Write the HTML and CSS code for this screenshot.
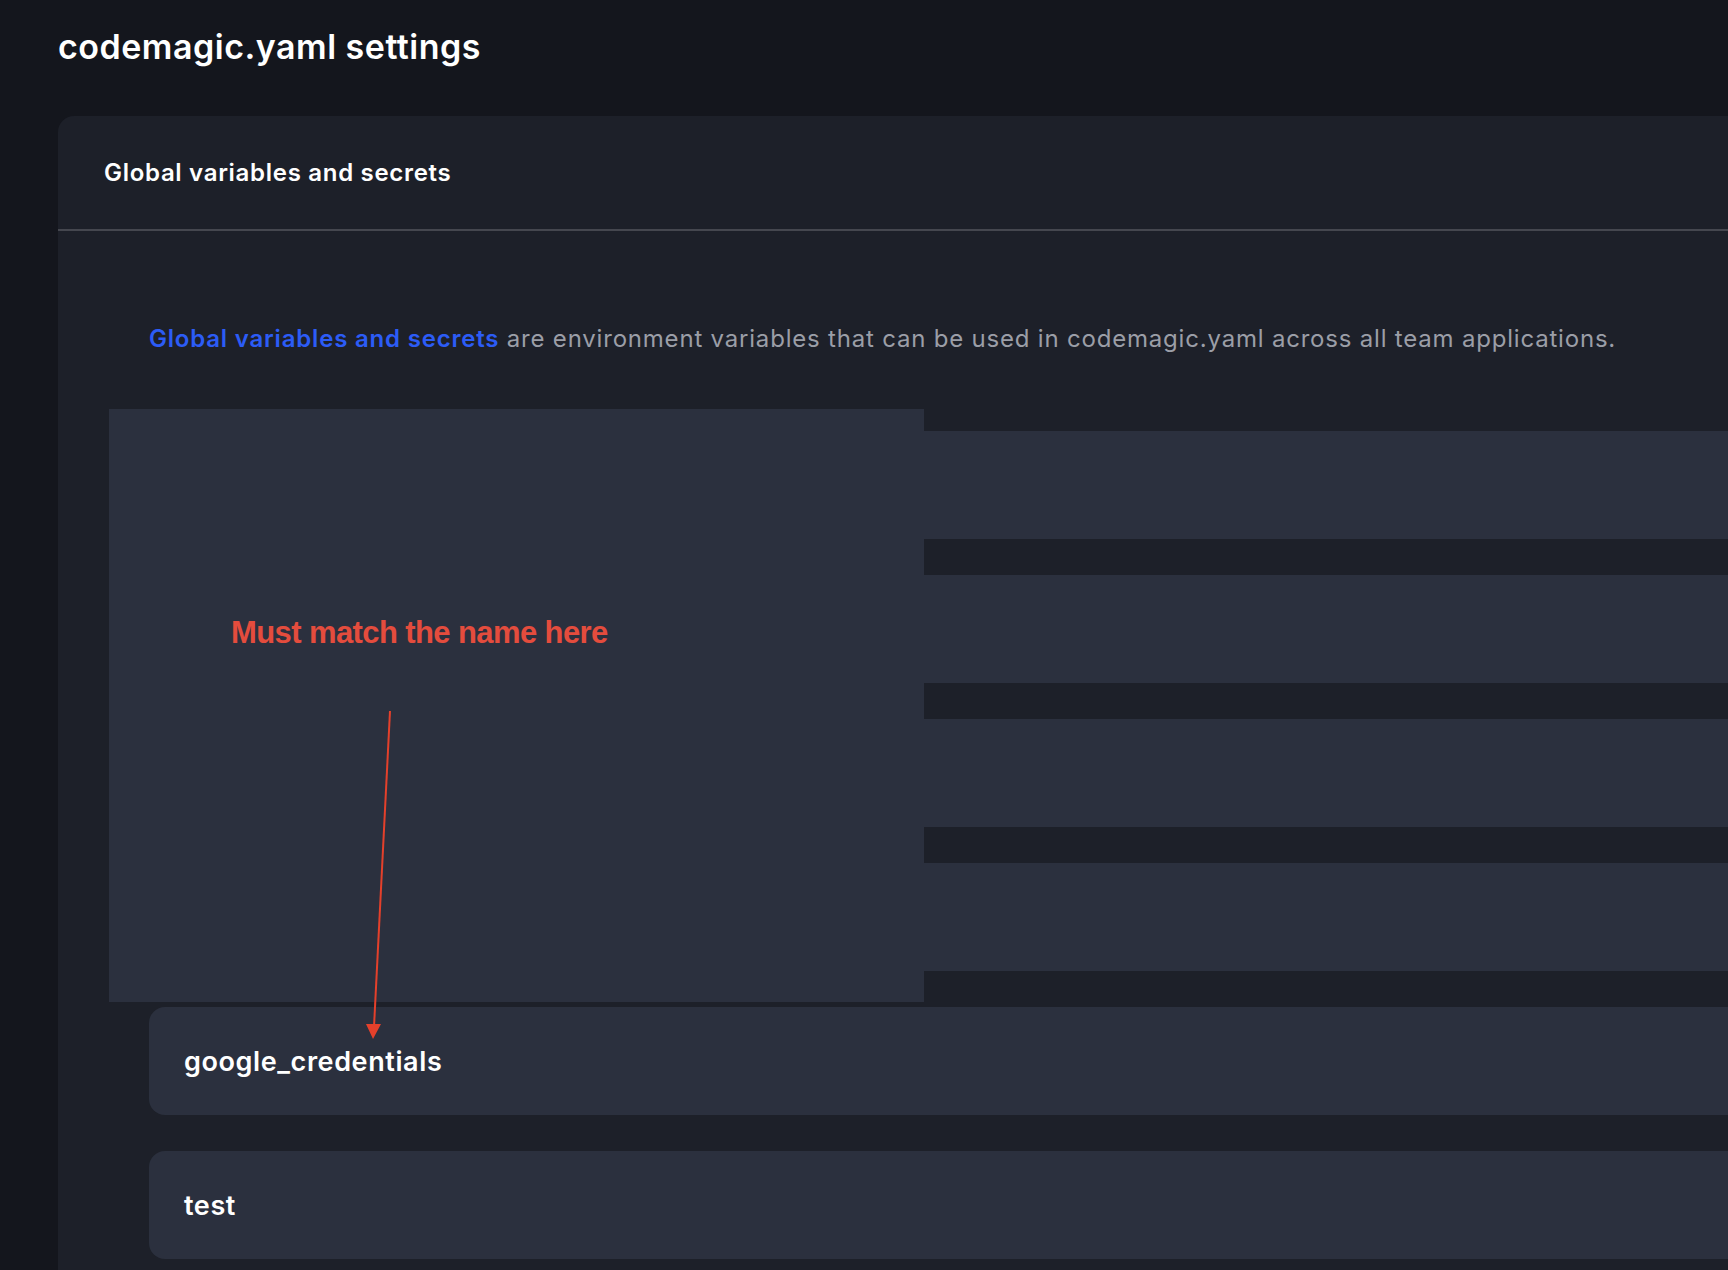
FILE: index.html
```html
<!DOCTYPE html>
<html lang="en">
<head>
  <meta charset="UTF-8">
  <meta name="viewport" content="width=device-width, initial-scale=1.0">
  <title>codemagic.yaml settings</title>
  <link rel="stylesheet" href="styles.css">
</head>
<body>
  <div class="page">
    <h1>codemagic.yaml settings</h1>
    <div class="card">
      <div class="card-header">Global variables and secrets</div>
      <div class="card-body">
        <p class="desc"><a href="#">Global variables and secrets</a> are environment variables that can be used in codemagic.yaml across all team applications.</p>
        <div class="groups">
          <div class="note">
            <span class="note-text">Must match the name here</span>
            <svg class="note-arrow" width="815" height="640" viewBox="0 0 815 640">
              <line x1="281" y1="302" x2="265" y2="618" stroke="#e4402b" stroke-width="2"/>
              <polygon points="257,615 272,615 264,630" fill="#e4402b"/>
            </svg>
          </div>
          <div class="group"></div>
          <div class="group"></div>
          <div class="group"></div>
          <div class="group"></div>
          <div class="group">google_credentials</div>
          <div class="group">test</div>
        </div>
      </div>
    </div>
  </div>
</body>
</html>
```

FILE: styles.css
```css
body {
  margin: 0;
  background: #14161d;
  font-family: Inter, "Open Sans", sans-serif;
  color: #fff;
  height: 100vh;
  overflow: hidden;
}
.page {
  padding-left: 58px;
}
h1 {
  margin: 0 0 49px;
  padding-top: 27px;
  font-size: 34px;
  line-height: 40px;
  font-weight: 600;
  letter-spacing: 0.5px;
}
.card {
  background: #1d2029;
  border-radius: 16px 0 0 0;
  margin-right: -40px;
  min-height: 1200px;
}
.card-header {
  height: 113px;
  display: flex;
  align-items: center;
  padding-left: 46px;
  font-size: 24px;
  font-weight: 600;
  letter-spacing: 0.7px;
  border-bottom: 2px solid #45474f;
}
.card-body {
  padding: 93px 0 0 91px;
}
.desc {
  margin: 0 0 77px;
  font-size: 24px;
  line-height: 30px;
  color: #9b9ea7;
  letter-spacing: 0.8px;
}
.desc a {
  color: #2c5cf6;
  font-weight: 600;
  text-decoration: none;
}
.groups {
  position: relative;
  display: flex;
  flex-direction: column;
  gap: 36px;
}
.group {
  height: 108px;
  display: flex;
  align-items: center;
  padding-left: 35px;
  background: #2b303e;
  border-radius: 16px 0 0 16px;
  font-size: 27px;
  font-weight: 600;
  letter-spacing: 0.6px;
}
.note {
  position: absolute;
  left: -40px;
  top: -22px;
  width: 815px;
  height: 593px;
  background: #2b303e;
  z-index: 1;
}
.note-text {
  position: absolute;
  left: 122px;
  top: 207px;
  font-family: "Liberation Sans", Arial, sans-serif;
  font-weight: 700;
  font-size: 31px;
  line-height: 34px;
  color: #e44c3d;
  letter-spacing: -0.6px;
}
.note-arrow {
  position: absolute;
  left: 0;
  top: 0;
  overflow: visible;
}
```
